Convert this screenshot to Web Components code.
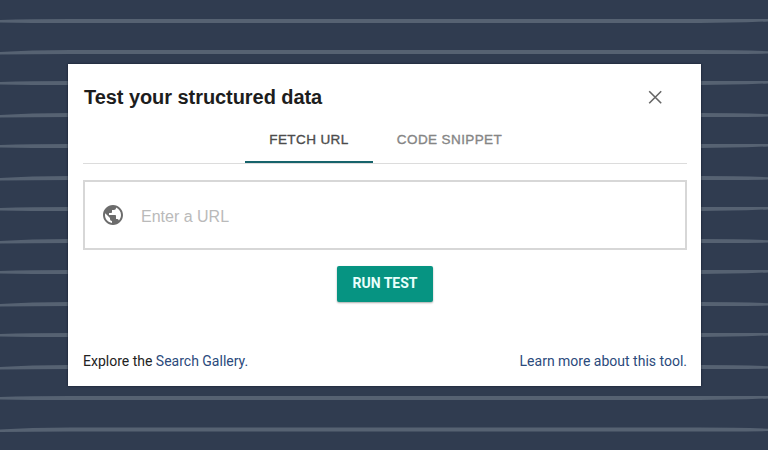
<!DOCTYPE html>
<html lang="en">
<head>
<meta charset="utf-8">
<title>Test your structured data</title>
<style>
html,body{margin:0;height:100%;overflow:hidden}
body{background:#303c50;font-family:Roboto,sans-serif}
</style>
</head>
<body>
<test-stage>
  <test-dialog>
    <dialog-title slot="head">Test your structured data</dialog-title>
    <tab-bar slot="tabs"><tab-item active>FETCH URL</tab-item><tab-item>CODE SNIPPET</tab-item></tab-bar>
    <url-field slot="field">Enter a URL</url-field>
    <run-button slot="action">RUN TEST</run-button>
    <dialog-links slot="foot"><span>Explore the <text-link>Search Gallery.</text-link></span><text-link>Learn more about this tool.</text-link></dialog-links>
  </test-dialog>
</test-stage>
<script>
const define = (name, html, setup) => customElements.define(name, class extends HTMLElement {
  constructor() {
    super();
    this.attachShadow({mode: 'open'}).innerHTML = html;
    if (setup) setup(this.shadowRoot);
  }
});

define('test-stage', `<style>
:host{display:grid;position:relative;width:768px;height:450px;background:#303c50;overflow:hidden}
svg{grid-area:1/1;width:768px;height:450px}
.content{grid-area:1/1;z-index:1;padding:64px 67px 64px 68px;display:grid}
</style><svg viewBox="0 0 768 450" fill="#566272"></svg><div class="content"><slot></slot></div>`, root => {
  const centers = [21,52,83,115,146,178,209,241,272,304,335,367,398,429.5];
  root.querySelector('svg').innerHTML = centers.map((y, i) => {
    const left = i % 2 ? y + 1.3 : y + .2;
    const right = i % 2 ? y + .4 : y - .8;
    return `<path d="M0 ${left-1.2} Q30 ${y-2} 70 ${y-2} L700 ${y-2} Q740 ${y-2} 768 ${right-1.2} V${right+1.2} Q730 ${y+2} 700 ${y+2} H70 Q30 ${y+2} 0 ${left+1.2}Z"/>`;
  }).join('');
});

define('test-dialog', `<style>
:host{display:flex;flex-direction:column;box-sizing:border-box;height:322px;background:#fff;padding:15px 14px 0 15px;box-shadow:0 0 2px #101a2a}
.tabs{margin-top:5px}.field{margin-top:16px}.action{margin-top:16px;display:flex;justify-content:center}
.foot{margin-top:49px}
</style><slot name="head"></slot><div class="tabs"><slot name="tabs"></slot></div><div class="field"><slot name="field"></slot></div><div class="action"><slot name="action"></slot></div><div class="foot"><slot name="foot"></slot></div>`);

define('dialog-title', `<style>
:host{display:flex;justify-content:space-between;align-items:center;height:36px;padding:0 24px 0 1px;font:bold 20px/36px "Liberation Sans",Arial,sans-serif;letter-spacing:-.06px;color:#1d1d1d}
svg{width:16px;height:16px}
</style><span><slot></slot></span><svg viewBox="0 0 16 16" fill="none" stroke="#666" stroke-width="1.6"><path d="M2.2 2.2 14.2 14.2M14.2 2.2 2.2 14.2"/></svg>`);

define('tab-bar', `<style>
:host{display:flex;justify-content:center;height:43px;border-bottom:1px solid #dcdcdc}
</style><slot></slot>`);

define('tab-item', `<style>
:host{display:block;box-sizing:border-box;width:153px;height:43px;padding-left:1px;text-align:center;white-space:nowrap;font:13.5px/40px "Liberation Sans",Arial,sans-serif;letter-spacing:.4px;-webkit-text-stroke:.35px currentColor;color:#858585}
:host([active]){width:128px;color:#4c4c4c;border-bottom:2px solid #16636b}
</style><slot></slot>`);

define('url-field', `<style>
:host{display:flex;align-items:center;box-sizing:border-box;height:70px;width:604px;border:2px solid #d7d7d7;padding-left:16px;gap:16px;font:16px/20px "Liberation Sans",Arial,sans-serif;color:#bababa}
svg{width:24px;height:24px}
span{padding-top:3px}
</style><svg viewBox="0 0 24 24" fill="#6c6c6c"><path d="M12 2C6.48 2 2 6.48 2 12s4.48 10 10 10 10-4.48 10-10S17.52 2 12 2zm-1 17.93c-3.95-.49-7-3.85-7-7.93 0-.62.08-1.21.21-1.79L9 15v1c0 1.1.9 2 2 2v1.93zm6.9-2.54c-.26-.81-1-1.39-1.9-1.39h-1v-3c0-.55-.45-1-1-1H8v-2h2c.55 0 1-.45 1-1V7h2c1.1 0 2-.9 2-2v-.41c2.93 1.19 5 4.06 5 7.41 0 2.08-.8 3.97-2.1 5.39z"/></svg><span><slot></slot></span>`);

define('run-button', `<style>
:host{display:block;width:96px;height:36px;background:#069482;border-radius:2px;text-align:center;color:#e9fffc;font:bold 14px/35px Roboto,sans-serif;box-shadow:0 1px 2px #0005}
</style><slot></slot>`);

define('dialog-links', `<style>
:host{display:flex;justify-content:space-between;font:400 14px/20px Roboto,sans-serif;color:#222;white-space:nowrap}
</style><slot></slot>`);

define('text-link', `<style>:host{display:inline;color:#2b4a7c}</style><slot></slot>`);
</script>
</body>
</html>
